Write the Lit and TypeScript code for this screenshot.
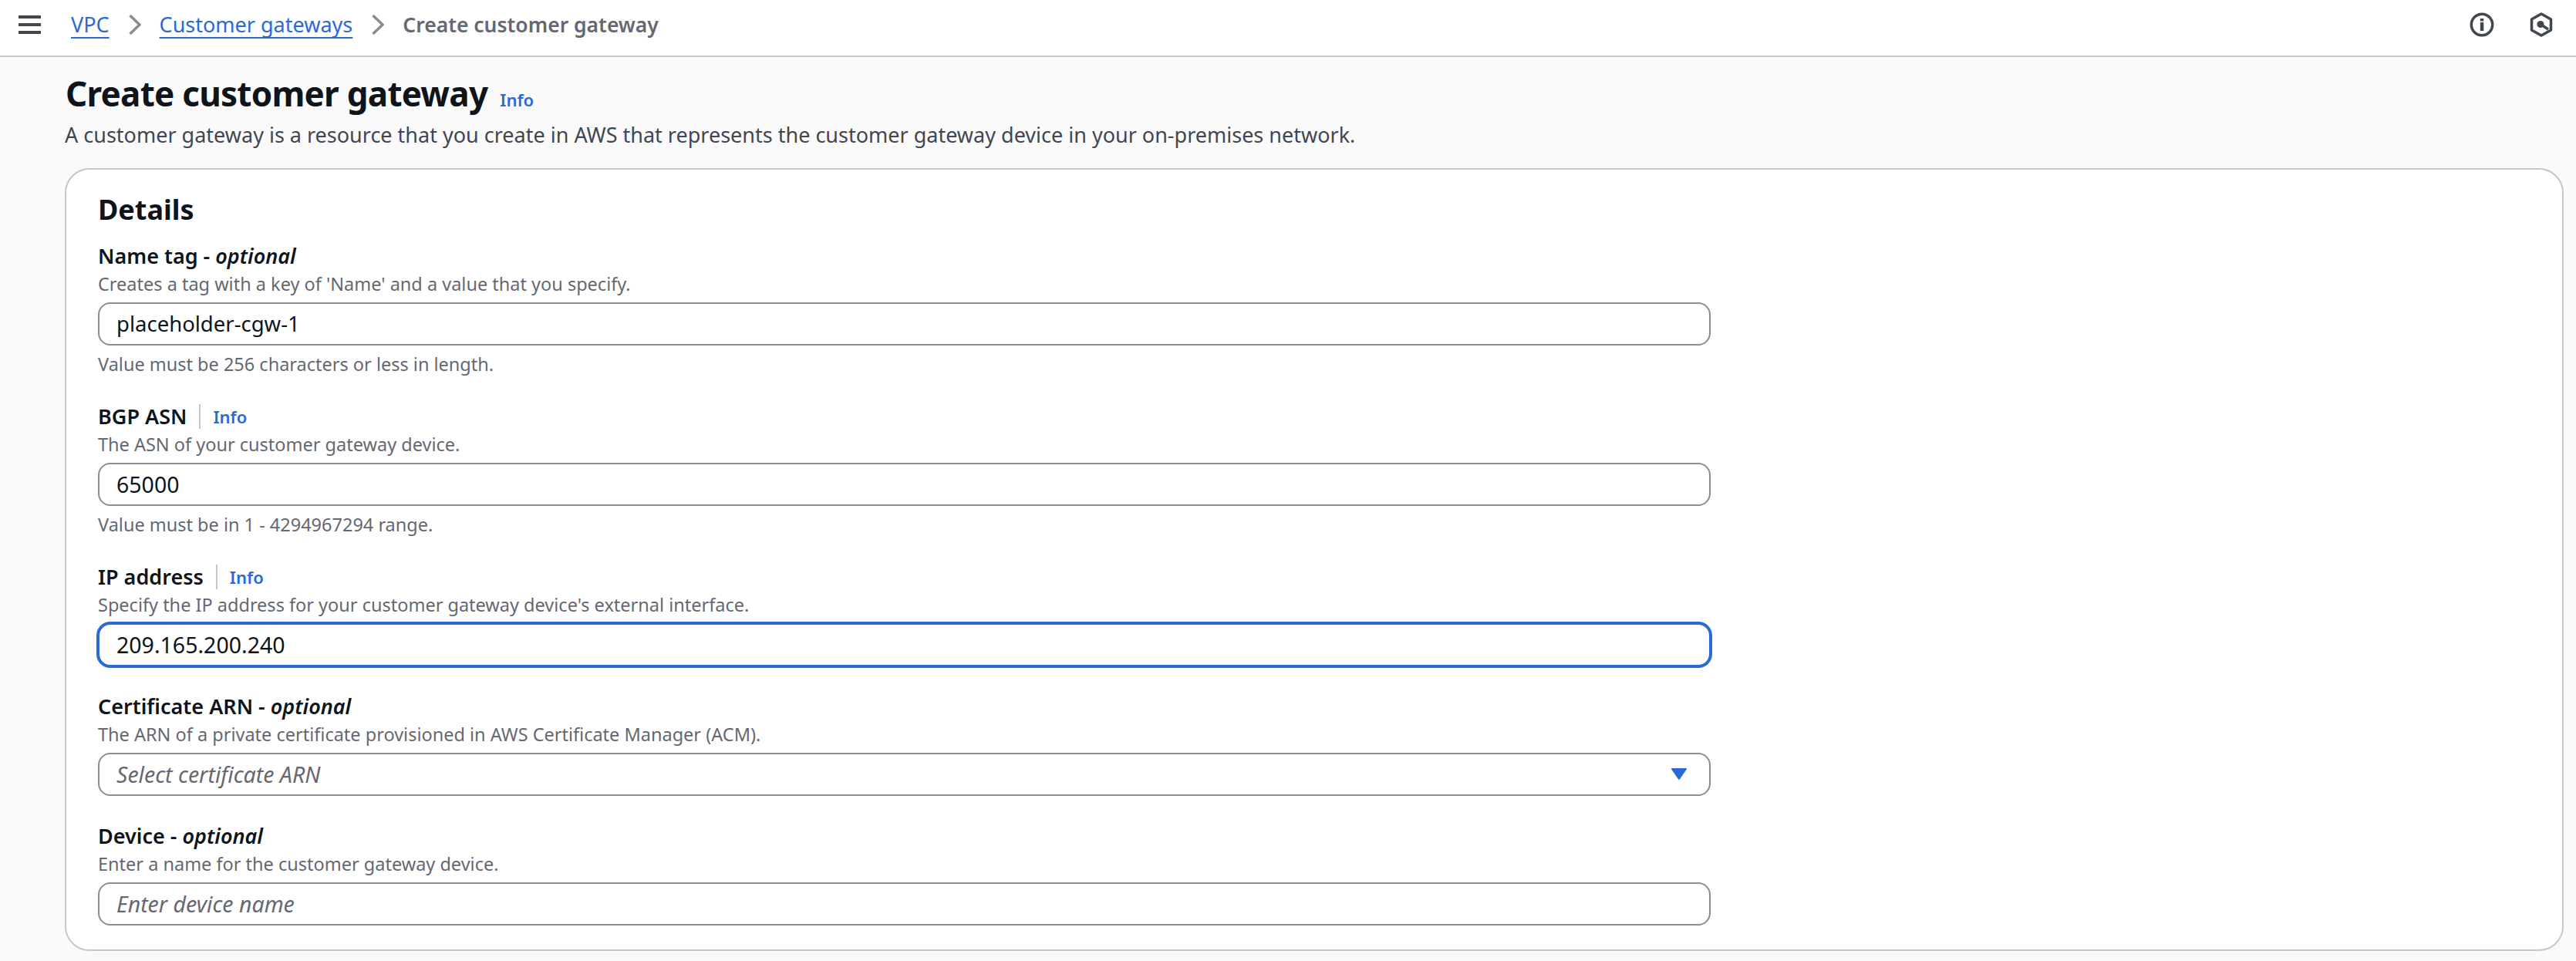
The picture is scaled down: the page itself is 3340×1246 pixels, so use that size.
import { LitElement, html, css } from "lit";
import { customElement } from "lit/decorators.js";

const chevron = html`<svg class="chev" width="16" height="26" viewBox="0 0 16 26"><path d="M1.5 1 L14 13 L1.5 25" fill="none" stroke="#8c8c94" stroke-width="3.5"/></svg>`;

@customElement("app-root")
export class AppRoot extends LitElement {
  static styles = css`
    :host { display: block; font-family: "Noto Sans", sans-serif; background: #fafafa; color: #0f141a; min-height: 1246px; }
    .top { height: 74px; box-sizing: border-box; background: #fff; border-bottom: 2px solid #c6c6cd; display: flex; align-items: center; padding: 0 24px 8px; }
    .burger { display: flex; flex-direction: column; gap: 6.5px; width: 29px; margin-right: 39px; }
    .burger i { display: block; height: 3.5px; background: #424650; }
    .crumbs { display: flex; align-items: center; font-size: 27px; line-height: 40px; flex: 1; }
    .crumbs a { color: #2b69d8; text-decoration: underline; text-decoration-thickness: 2px; text-underline-offset: 6px; }
    .chev { margin: 0 24px 0 25px; }
    .cur { color: #656871; font-weight: 600; font-size: 26.5px; }
    .icons { display: flex; gap: 46px; align-items: center; padding-right: 6px; }
    .icons svg { display: block; }
    .main { padding: 0 16px 0 84px; }
    .head { padding-top: 17px; padding-left: 1px; display: flex; align-items: baseline; gap: 16px; }
    h1 { margin: 0; font-size: 44px; line-height: 60px; font-weight: 700; letter-spacing: -0.75px; }
    .info { color: #2b69d8; font-weight: 600; font-size: 22px; }
    .sub { font-size: 27px; line-height: 40px; color: #424650; margin: 4px 0 0; }
    .card { background: #fff; border: 2px solid #c6c6cd; border-radius: 32px; margin-top: 23px; padding: 28px 40px 31px 41px; box-sizing: border-box; }
    h2 { margin: 0 0 16px; font-size: 36px; line-height: 48px; font-weight: 700; }
    .form { display: flex; flex-direction: column; gap: 32px; width: 2091px; }
    .lab { display: flex; align-items: center; font-size: 27px; line-height: 40px; font-weight: 600; height: 40px; }
    .lab em { font-weight: 600; font-style: italic; }
    .sep { border-left: 2px solid #c6c6cd; height: 32px; margin: 0 16px; }
    .desc { font-size: 23.5px; line-height: 32px; color: #656871; }
    .input { margin-top: 8px; height: 56px; box-sizing: border-box; border: 2px solid #8c8c94; border-radius: 16px; padding: 0 22px; font-size: 27.5px; line-height: 52px; display: flex; align-items: center; justify-content: space-between; background: #fff; color: #0f141a; }
    .input.num { font-size: 28.5px; }
    .input.focus { border-color: #2b69d8; box-shadow: 0 0 0 2px #2b69d8; }
    .input.ph { color: #656871; font-style: italic; font-size: 28.5px; }
    .con { margin-top: 8px; font-size: 23.5px; line-height: 32px; color: #656871; }
    .tri { display: block; margin-right: 5px; }
  `;

  field(label: any, desc: string, value: string, opts: { con?: string; cls?: string; tri?: boolean } = {}) {
    return html`<div class="field">
      <div class="lab">${label}</div>
      <div class="desc">${desc}</div>
      <div class="input ${opts.cls ?? ""}" role="textbox"><span>${value}</span>${opts.tri
        ? html`<svg class="tri" width="24" height="18" viewBox="0 0 24 18"><path d="M3 2 H21 L12 15 Z" fill="#2b69d8" stroke="#2b69d8" stroke-width="2" stroke-linejoin="round"/></svg>`
        : ""}</div>
      ${opts.con ? html`<div class="con">${opts.con}</div>` : ""}
    </div>`;
  }

  render() {
    return html`
      <header class="top">
        <div class="burger"><i></i><i></i><i></i></div>
        <nav class="crumbs">
          <a>VPC</a>${chevron}<a>Customer gateways</a>${chevron}<span class="cur">Create customer gateway</span>
        </nav>
        <div class="icons">
          <svg width="32" height="32" viewBox="0 0 32 32"><circle cx="16" cy="16" r="13.7" fill="none" stroke="#424650" stroke-width="3.5"/><rect x="13.8" y="13" width="4.5" height="11" fill="#424650"/><rect x="13.8" y="8" width="4.5" height="3.5" fill="#424650"/></svg>
          <svg width="30" height="32" viewBox="0 0 30 32"><path d="M15 2 L27.5 9 V23 L15 30 L2.5 23 V9 Z" fill="none" stroke="#424650" stroke-width="3.5" stroke-linejoin="round"/><circle cx="14" cy="15.5" r="4.5" fill="#424650"/><path d="M14 15.5 L24 22" stroke="#424650" stroke-width="3.5"/></svg>
        </div>
      </header>
      <main class="main">
        <div class="head"><h1>Create customer gateway</h1><a class="info">Info</a></div>
        <p class="sub">A customer gateway is a resource that you create in AWS that represents the customer gateway device in your on-premises network.</p>
        <section class="card">
          <h2>Details</h2>
          <div class="form">
            ${this.field(html`<span>Name tag -&nbsp;<em>optional</em></span>`, "Creates a tag with a key of 'Name' and a value that you specify.", "placeholder-cgw-1", { con: "Value must be 256 characters or less in length." })}
            ${this.field(html`BGP ASN<span class="sep"></span><a class="info">Info</a>`, "The ASN of your customer gateway device.", "65000", { con: "Value must be in 1 - 4294967294 range.", cls: "num" })}
            ${this.field(html`IP address<span class="sep"></span><a class="info">Info</a>`, "Specify the IP address for your customer gateway device's external interface.", "209.165.200.240", { cls: "focus num" })}
            ${this.field(html`<span>Certificate ARN -&nbsp;<em>optional</em></span>`, "The ARN of a private certificate provisioned in AWS Certificate Manager (ACM).", "Select certificate ARN", { cls: "ph", tri: true })}
            ${this.field(html`<span>Device -&nbsp;<em>optional</em></span>`, "Enter a name for the customer gateway device.", "Enter device name", { cls: "ph" })}
          </div>
        </section>
      </main>
    `;
  }
}
